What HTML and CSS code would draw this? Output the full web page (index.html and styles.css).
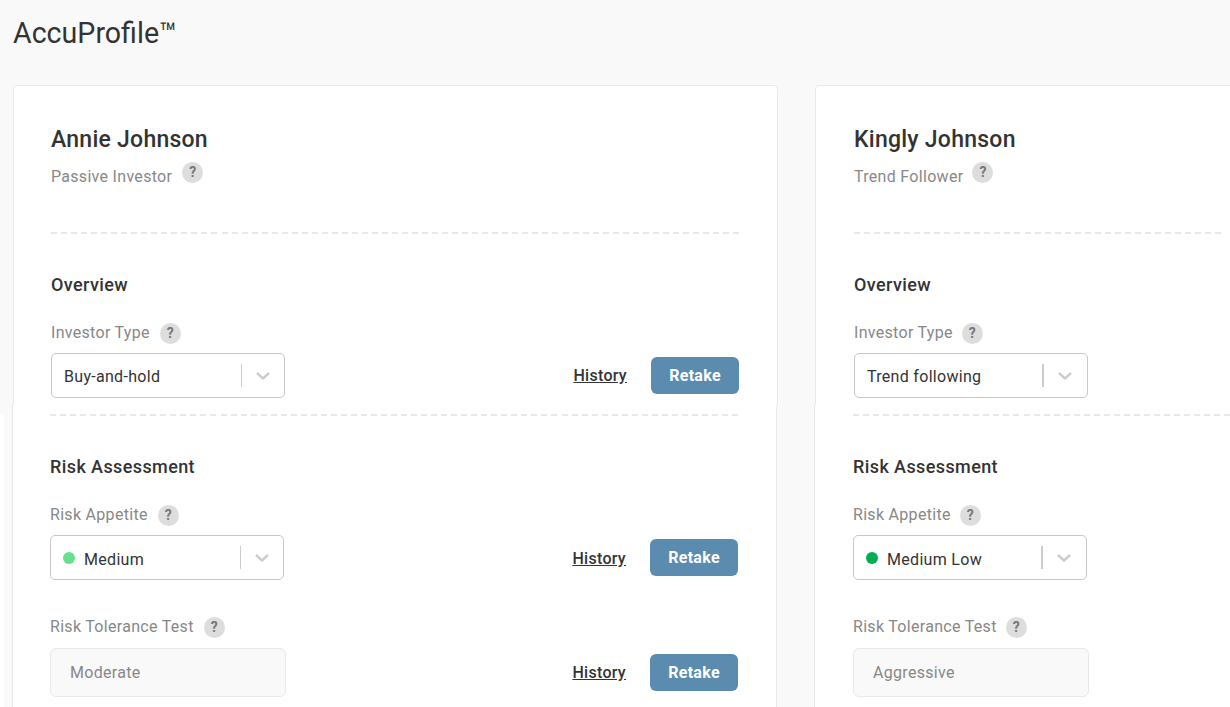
FILE: index.html
```html
<!DOCTYPE html>
<html lang="en">
<head>
<meta charset="utf-8">
<title>AccuProfile</title>
<link rel="stylesheet" href="styles.css">
</head>
<body>
<h1 class="title">AccuProfile™</h1>
<div class="columns">
  <section class="column">
    <div class="card card-top">
      <h2 class="name">Annie Johnson</h2>
      <div class="persona"><span>Passive Investor</span><span class="help help-up">?</span></div>
      <hr class="dash dash-head">
      <h3 class="section-title">Overview</h3>
      <div class="field-label"><span>Investor Type</span><span class="help">?</span></div>
      <div class="row">
        <div class="select"><span class="select-text">Buy-and-hold</span><span class="sep"></span><svg class="chev" viewBox="0 0 14 8"><path d="M1 1l6 5.5L13 1" fill="none" stroke="#ccc" stroke-width="2.4"/></svg></div>
        <div class="actions"><a class="link" href="#">History</a><button class="btn">Retake</button></div>
      </div>
    </div>
    <div class="card card-bottom">
      <hr class="dash dash-seam">
      <h3 class="section-title">Risk Assessment</h3>
      <div class="field-label"><span>Risk Appetite</span><span class="help">?</span></div>
      <div class="row">
        <div class="select"><span class="dot dot-medium"></span><span class="select-text">Medium</span><span class="sep"></span><svg class="chev" viewBox="0 0 14 8"><path d="M1 1l6 5.5L13 1" fill="none" stroke="#ccc" stroke-width="2.4"/></svg></div>
        <div class="actions"><a class="link" href="#">History</a><button class="btn">Retake</button></div>
      </div>
      <div class="field-label label-second"><span>Risk Tolerance Test</span><span class="help">?</span></div>
      <div class="row row-readonly">
        <div class="readonly">Moderate</div>
        <div class="actions"><a class="link" href="#">History</a><button class="btn">Retake</button></div>
      </div>
    </div>
  </section>
  <section class="column column-alt">
    <div class="card card-top">
      <h2 class="name">Kingly Johnson</h2>
      <div class="persona"><span>Trend Follower</span><span class="help help-up">?</span></div>
      <hr class="dash dash-head dash-short">
      <h3 class="section-title">Overview</h3>
      <div class="field-label"><span>Investor Type</span><span class="help">?</span></div>
      <div class="row">
        <div class="select"><span class="select-text">Trend following</span><span class="sep"></span><svg class="chev" viewBox="0 0 14 8"><path d="M1 1l6 5.5L13 1" fill="none" stroke="#ccc" stroke-width="2.4"/></svg></div>
      </div>
    </div>
    <div class="card card-bottom">
      <hr class="dash dash-seam">
      <h3 class="section-title">Risk Assessment</h3>
      <div class="field-label"><span>Risk Appetite</span><span class="help">?</span></div>
      <div class="row">
        <div class="select"><span class="dot dot-low"></span><span class="select-text">Medium Low</span><span class="sep"></span><svg class="chev" viewBox="0 0 14 8"><path d="M1 1l6 5.5L13 1" fill="none" stroke="#ccc" stroke-width="2.4"/></svg></div>
      </div>
      <div class="field-label label-second"><span>Risk Tolerance Test</span><span class="help">?</span></div>
      <div class="row row-readonly">
        <div class="readonly">Aggressive</div>
      </div>
    </div>
  </section>
</div>
</body>
</html>
```
FILE: styles.css
```css
html, body { margin: 0; height: 707px; overflow: hidden; }
body { background: linear-gradient(#fff, #fff) 0 414px / 4px 100% no-repeat, #f9f9f9; font-family: Roboto, "Liberation Sans", sans-serif; color: #333; }
.title { margin: 0; padding: 15px 0 0 13px; height: 71px; box-sizing: border-box; font-size: 28.6px; line-height: 36px; font-weight: 400; }
.columns { display: flex; gap: 37px; width: 1600px; padding-left: 13px; }
.column { width: 765px; flex: none; }
.card { background: #fff; box-sizing: border-box; border: 1px solid #e9e9e9; }
.card-top { height: 320px; margin-top: 14px; border-bottom: 0; border-radius: 5px 5px 0 0; padding: 37px 38px 0 37px; }
.card-bottom { width: 765px; height: 320px; margin-left: -1px; border-top: 0; padding: 9px 38px 0 37px; }
.column-alt .card { padding-left: 38px; }
.name { margin: 0; font-size: 23px; line-height: 34px; font-weight: 500; letter-spacing: .25px; }
.persona { display: flex; align-items: center; gap: 10px; height: 24px; margin-top: 7px; font-size: 16px; letter-spacing: .3px; color: #888; }
.help { display: inline-flex; align-items: center; justify-content: center; width: 21px; height: 21px; border-radius: 50%; background: #ddd; color: #777; font-size: 14px; font-weight: 700; letter-spacing: 0; position: relative; top: 1px; }
.field-label .help { margin-left: 1px; }
.column-alt .field-label .help { margin-left: 0; }
.column-alt .persona { gap: 9px; }
.help-up { top: -4px; }
.dash { margin: 0; height: 2px; border: 0; background: repeating-linear-gradient(90deg, #e8e8e8 0 6px, transparent 6px 10.03px); }
.dash-head { margin-top: 44px; }
.dash-short { width: 367px; }
.section-title { margin: 0; font-size: 18px; line-height: 24px; font-weight: 500; letter-spacing: .4px; }
.card-top .section-title { margin-top: 39px; }
.card-bottom .section-title { margin-top: 39px; }
.field-label { display: flex; align-items: center; gap: 9px; height: 24px; margin-top: 23px; font-size: 16px; letter-spacing: .3px; color: #888; }
.card-bottom .label-second { margin-top: 34px; }
.row { display: flex; align-items: center; justify-content: space-between; margin-top: 9px; }
.row-readonly { margin-top: 10px; }
.select { display: flex; align-items: center; width: 234px; height: 45px; box-sizing: border-box; padding: 0 12px; border: 1px solid #c8c8c8; border-radius: 5px; background: #fff; font-size: 16px; letter-spacing: .3px; }
.select-text { flex: 1; padding-top: 1px; }
.card-bottom .select-text { padding-top: 3px; }
.dot { width: 12px; height: 12px; border-radius: 50%; margin-right: 9px; }
.dot-medium { background: #66e08c; }
.dot-low { background: #00b050; }
.sep { width: 1px; height: 23px; background: #ccc; }
.chev { width: 14px; height: 8px; margin: 0 2px 0 14px; }
.column-alt .sep { width: 2px; }
.column-alt .chev { margin-right: 3px; }
.actions { display: flex; align-items: center; gap: 24px; }
.link { color: #333; font-size: 16px; font-weight: 500; letter-spacing: .3px; }
.select + .actions .link { margin-top: 0; }
.card-bottom .select + .actions .link { margin-top: 2px; }
.btn { width: 88px; height: 37px; border: 0; border-radius: 6px; background: #5b8cb0; color: #fff; font: 700 16px Roboto, sans-serif; letter-spacing: .3px; }
.readonly { display: flex; align-items: center; width: 236px; height: 49px; box-sizing: border-box; padding-left: 19px; border: 1px solid #e9e9e9; border-radius: 6px; background: #f9f9f9; color: #888; font-size: 16px; letter-spacing: .3px; }
```
